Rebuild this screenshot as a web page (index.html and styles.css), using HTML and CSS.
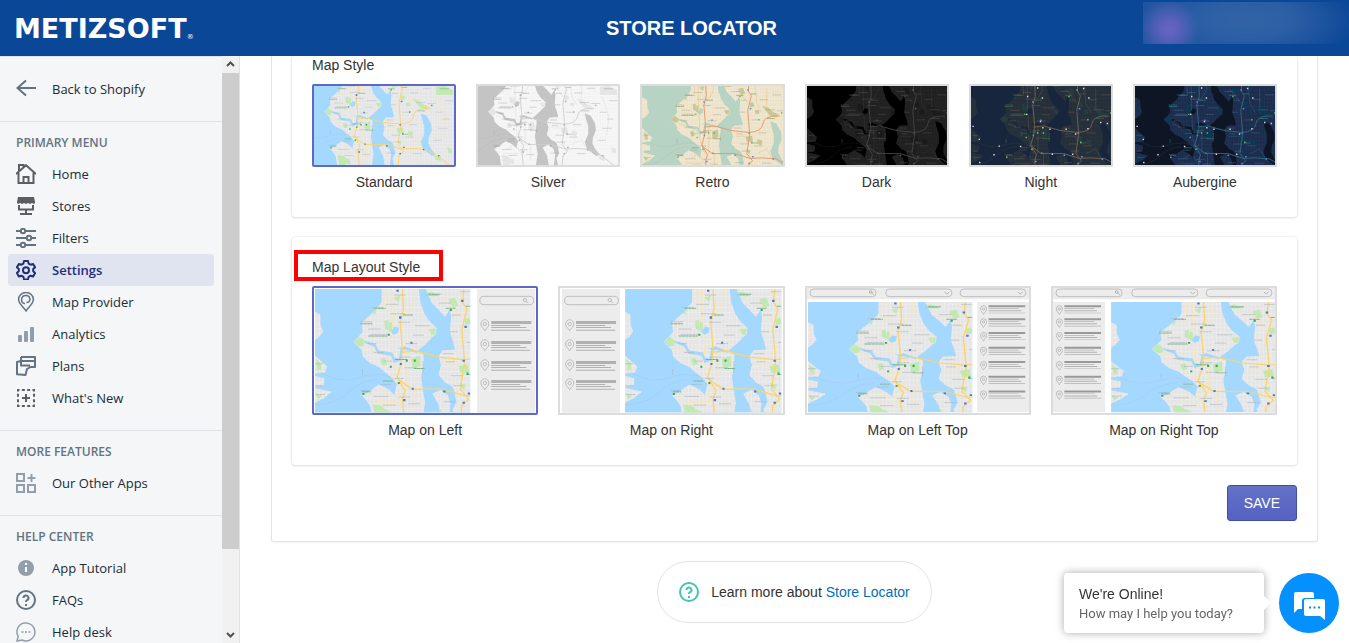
FILE: index.html
```html
<!DOCTYPE html>
<html lang="en">
<head>
<meta charset="utf-8">
<meta name="viewport" content="width=device-width, initial-scale=1">
<title>Store Locator</title>
<link rel="stylesheet" href="styles.css">
</head>
<body>
<svg class="defs" aria-hidden="true">
  <defs>
    <path id="land" d="M200 -5V40L172 72L139 102L143 128L130 144L115 158L139 182L144 203L164 222L192 234L212 252L232 268L246 285L242 298L238 318L222 302L192 286L172 300L158 312L138 316L154 334L166 352L172 395H322L330 340L322 296L318 262L326 222L325 196L306 186L330 166L352 144L362 136L364 116L344 98L328 74L316 40L310 -5ZM-10 68H0L16 78V104L24 128L10 146L-10 158ZM-10 190L16 214L36 232L30 250L-10 254ZM-10 258L28 268L26 288L-10 294ZM-10 294L50 308L28 326L-10 346ZM330 -5L350 42L372 64L390 84L404 60L408 84L404 128L412 152L420 182L382 184L370 202L378 228L370 258L390 280L412 292L420 318L424 340L412 360L420 395H700V-5ZM352 314L376 302L398 318L406 344L400 395H380L370 346Z"/>
    <clipPath id="land-clip"><use href="#land"/></clipPath>
    <g id="map">
      <rect class="m-water" x="-20" y="-20" width="740" height="440"/>
      <use class="m-land" href="#land"/>
      <g clip-path="url(#land-clip)">
        <path class="m-street" stroke-width="420" stroke-dasharray="2 9" d="M-10 190H700"/>
        <path class="m-street" stroke-width="720" stroke-dasharray="2 14" d="M345 -10V400"/>
        <path class="m-park" d="M115 158L133 143L150 155L146 170L132 172ZM236 25L256 20L250 40ZM208 96L220 92L222 122L210 120ZM340 120L362 118L360 138L348 136ZM222 100H232V128H222ZM318 12L350 8L372 22H330ZM400 30L420 26L430 50L412 56ZM166 64L184 60L180 78ZM196 210L210 205L216 226L202 230ZM288 208L314 200L316 232L292 236ZM174 346L200 350L216 368L206 390H180ZM210 360L226 366L228 385H212ZM156 300L170 296L168 316ZM430 230L458 226L462 250L436 252ZM446 90L462 86L468 104L450 108ZM350 350L366 344L380 368L362 372ZM2 210L18 222V244L6 240ZM0 312L20 320L10 332ZM500 100L525 108L548 128L570 138L560 150L530 140ZM600 50L640 45L675 64V85H602ZM470 120L488 118V134H472ZM480 240L502 246L498 266L480 260ZM592 352L620 346L622 372L600 366ZM650 310L670 320V340L654 336ZM380 100L396 98V120L384 118ZM556 200L562 190L568 210ZM430 282L452 286L446 304Z"/>
        <path class="m-minor" d="M230 0L232 90L236 180L238 240L258 300M296 0L294 40L270 80M200 320L232 300L262 345M212 0L216 60M180 340H250M470 0L478 90L500 130M520 30V110M392 30L440 90M610 90L640 180L630 260M480 300L520 280L550 330M390 228H440M276 180V300M300 300V370M150 175L230 205"/>
      </g>
      <path class="m-water" d="M228 128L238 112L252 116L248 132L236 138ZM150 155L180 164L192 184L232 190L238 206L252 208L256 180L246 178L270 172L306 186L306 192L270 182L260 186L258 214L236 222L228 200L188 194L176 172L150 162ZM535 165L560 175L580 210L583 240L570 270L568 295L580 320L600 345L585 350L545 320L535 290L550 255L550 220L540 190Z"/>
      <path class="m-ferry" d="M0 240Q70 286 130 266T236 268M0 346Q60 346 100 310T186 272"/>
      <path class="m-road" d="M262 -5L265 60L255 100L262 180L258 224L246 264L270 305L262 330L268 395M258 190L300 185L370 204L444 212M246 268L290 300H385L450 320L500 318L560 322L610 350L665 395M446 -5L442 40L455 60L440 120L448 220L436 300L460 330L440 350L436 395M444 212Q500 210 504 175T575 144"/>
      <path class="m-label" d="M238 18h32M212 46h38M170 56h34M226 74h44M136 98h36M250 100h36M160 120h38M300 110h44M166 136h50M294 138h32M158 164h26M272 164h36M176 190h30M206 216h26M252 204h34M268 236h38M238 268h28M196 286h32M176 322h44M252 324h34M204 348h38M280 344h36M136 304h30M332 18h40M372 42h36M410 78h26M404 128h24M384 194h30M392 218h26M408 260h34M416 290h26M386 338h34M434 8h30M456 160h30M490 76h34M512 118h42M564 122h38M600 160h30M484 214h36M468 268h34M610 230h42M592 282h34M500 340h40M632 190h26M544 56h36M600 24h40M640 110h38M2 290h22M4 316h26M0 224h24M324 216v34M142 240v18"/>
      <path class="m-label-green" d="M136 104h36M160 141h56M178 58h34M240 211h36M296 238h32M142 308h24M392 58h30M340 16h36M454 256h26M204 276h30M264 78h30M520 154h34M618 58h40M452 52h24"/>
      <path class="m-shield" d="M252 82h7v7h-7zM244 2h7v6h-7zM286 158h6v6h-6zM254 222h6v6h-6zM290 296h6v6h-6zM264 330h7v6h-7zM438 32h7v7h-7zM448 110h7v7h-7zM442 212h7v6h-7zM384 304h7v6h-7zM458 310h7v6h-7zM442 338h7v6h-7zM544 320h7v6h-7zM610 346h6v6h-6z"/>
      <path class="m-poi" d="M218 134h6v6h-6zM272 211h6v7h-6zM296 211h6v7h-6zM248 279h6v6h-6zM142 312h6v6h-6zM404 60h6v6h-6zM454 250h6v7h-6zM224 230h6v6h-6zM484 156h6v6h-6zM580 128h6v6h-6z"/>
      <path class="m-dot" d="M230 60h6v6h-6zM292 66h6v6h-6zM226 134h6v6h-6zM284 164h6v6h-6zM110 266h6v6h-6zM88 302h6v6h-6zM26 238h6v6h-6zM200 268h6v6h-6zM324 196h6v6h-6zM392 196h6v6h-6zM488 66h6v6h-6zM538 168h6v6h-6zM566 172h6v6h-6zM484 194h6v6h-6zM272 24h6v6h-6zM466 26h6v6h-6zM420 300h6v6h-6zM334 300h6v6h-6zM0 184h6v6h-6zM28 334h6v6h-6zM432 216h6v6h-6zM294 190h6v6h-6z"/>
    </g>
    <g id="pin"><path d="M0 19C-4 11-12 8-12-1A12 13 0 0 1 12-1C12 8 4 11 0 19Z"/><circle r="5" cy="-1"/></g>
    <g id="pin-small"><path d="M0 15C-3 8-9 6-9-1A9 10 0 0 1 9-1C9 6 3 8 0 15Z"/><circle r="3.5" cy="-1"/></g>
    <g id="row"><use class="line" href="#pin"/><path class="bar" d="M19-10h120v9H19zM19 2h87v3H19zM19 8h105v3H19zM19 16h117v3H19z"/></g>
    <g id="row-small"><use class="line" href="#pin-small"/><path class="bar-dark" d="M15-12h110v6H15z"/><path class="bar" d="M15-3h90v2H15zM15 3h98v3H15zM15 10h110v2H15z"/></g>
    <g id="list">
      <rect class="panel" width="174" height="371"/>
      <g class="line"><rect x="8" y="22" width="161" height="25" rx="12"/><circle cx="143" cy="33" r="5"/><path d="M147 37l6 5"/></g>
      <use href="#row" x="23" y="106"/><use href="#row" x="23" y="166"/><use href="#row" x="23" y="226"/><use href="#row" x="23" y="283"/>
    </g>
    <g id="list-small">
      <rect class="panel" width="156" height="330"/>
      <use href="#row-small" x="19" y="22"/><use href="#row-small" x="19" y="61"/><use href="#row-small" x="19" y="102"/><use href="#row-small" x="19" y="146"/><use href="#row-small" x="19" y="189"/><use href="#row-small" x="19" y="233"/><use href="#row-small" x="19" y="277"/>
    </g>
    <g id="filters">
      <rect class="panel" x="6" y="6" width="666" height="34"/>
      <g class="line"><rect x="15" y="9" width="198" height="23" rx="11"/><rect x="242" y="9" width="198" height="23" rx="11"/><rect x="465" y="9" width="197" height="23" rx="11"/></g>
      <g class="mark"><circle cx="197" cy="18" r="4"/><path d="M200 21l6 5M418 18l7 6 7-6M638 18l7 6 7-6"/></g>
    </g>
  </defs>
</svg>

<header class="topbar">
  <a class="logo" href="#" aria-label="Metizsoft">METIZSOFT<span class="logo-mark">®</span></a>
  <h1 class="title">STORE LOCATOR</h1>
  <div class="account"></div>
</header>

<div class="body">
  <aside class="sidebar">
    <nav class="menu">
      <div class="section back">
        <a class="item" href="#"><svg class="icon slate" viewBox="0 0 20 20"><path d="M20 9H1.500M10 1.500L1.500 9l8.500 7.500"/></svg>Back to Shopify</a>
      </div>
      <div class="section">
        <h2 class="heading">PRIMARY MENU</h2>
        <a class="item" href="#"><svg class="icon gray" viewBox="0 0 20 20"><path d="M0 10L10 1.200 20 10M2.500 8V19h15V8M3 7V1h4.500v2.500M7.500 19v-6h5v6"/></svg>Home</a>
        <a class="item" href="#"><svg class="icon gray" viewBox="0 0 20 20"><path class="solid" d="M2 1h16l1 5v1l-1 1-2-1-2 1-2-1-2 1-2-1-2 1-2-1-2 1-1-1V6z"/><path d="M3 9v4.500h14V9M10 14v4M4 18h12"/></svg>Stores</a>
        <a class="item" href="#"><svg class="icon slate" viewBox="0 0 20 20"><path d="M0 3h4.500M9.500 3H20M0 10h10.500M15.500 10H20M0 17h4.500M9.500 17H20"/><circle cx="7" cy="3" r="2.200"/><circle cx="13" cy="10" r="2.200"/><circle cx="7" cy="17" r="2.200"/></svg>Filters</a>
        <a class="item current" href="#" aria-current="page"><svg class="icon navy" viewBox="0 0 20 20"><path stroke-linejoin="round" d="M8 1h4l.6 2.600 2 1.100 2.500-.8 2 3.400-1.900 1.800v2.200l1.900 1.800-2 3.400-2.500-.8-2 1.100L12 19.400H8l-.6-2.600-2-1.100-2.500.8-2-3.400 1.900-1.800V9.100L.9 7.300l2-3.400 2.500.8 2-1.100z"/><circle cx="10" cy="10.200" r="3"/></svg>Settings</a>
        <a class="item" href="#"><svg class="icon slate thin" viewBox="0 0 20 20"><path d="M10 19C8 15 2.600 12 2.600 7.500a7.400 7 0 0 1 14.800 0C17.400 12 12 15 10 19z"/><path d="M9 11.800A4.200 4.200 0 1 1 14 7.500A3.500 3.500 0 0 1 10.500 10.500"/></svg>Map Provider</a>
        <a class="item" href="#"><svg class="icon mist" viewBox="0 0 20 20"><g class="solid"><rect x="2" y="11" width="4" height="7" rx="1"/><rect x="8" y="7" width="4" height="11" rx="1"/><rect x="14" y="3" width="4" height="15" rx="1"/></g></svg>Analytics</a>
        <a class="item" href="#"><svg class="icon slate" viewBox="0 0 20 20"><path stroke-linejoin="round" d="M5 1h14v10h-4.500l-3.500 2-1.500 6-8.500-.8V6l4-1M5 1v8.500h9M5 5h14"/></svg>Plans</a>
        <a class="item" href="#"><svg class="icon gray" viewBox="0 0 20 20"><path stroke-dasharray="3 2.330" d="M2 3.500V2h16v16H2V3.500"/><path d="M10 6v8M6 10h8"/></svg>What's New</a>
      </div>
      <div class="section">
        <h2 class="heading">MORE FEATURES</h2>
        <a class="item" href="#"><svg class="icon mist" viewBox="0 0 20 20"><path d="M1 1h7v7H1zM1 12h7v7H1zM12 12h7v7h-7zM15.500 1v8M11.500 5h8"/></svg>Our Other Apps</a>
      </div>
      <div class="section">
        <h2 class="heading">HELP CENTER</h2>
        <a class="item" href="#"><svg class="icon mist" viewBox="0 0 20 20"><circle class="solid" cx="10" cy="10" r="8"/><path class="knock" d="M10 9v5M10 5v2"/></svg>App Tutorial</a>
        <a class="item" href="#"><svg class="icon slate" viewBox="0 0 20 20"><circle cx="10" cy="10" r="9"/><path d="M7.500 8a2.500 2.500 0 1 1 3.500 2.200q-1 .5-1 1.800M10 14v2"/></svg>FAQs</a>
        <a class="item" href="#"><svg class="icon mist thin" viewBox="0 0 20 20"><path d="M1 19l1.200-4.500A9 9 0 1 1 6 18z"/><path d="M5.500 10h2M9 10h2M12.500 10h2"/></svg>Help desk</a>
      </div>
    </nav>
    <div class="scroll" aria-hidden="true">
      <svg class="arrow" viewBox="0 0 17 17"><path d="M5 10l3.500-3.500L12 10"/></svg>
      <div class="track"><div class="grip"></div></div>
      <svg class="arrow" viewBox="0 0 17 17"><path d="M5 7l3.500 3.500L12 7"/></svg>
    </div>
  </aside>

  <main class="main">
    <form class="settings">
      <fieldset class="card styles" aria-labelledby="style-name">
        <div class="label"><span id="style-name">Map Style</span></div>
        <div class="grid six">
          <label class="choice"><input type="radio" name="style" checked><svg class="thumb small" viewBox="71 46 609 344" preserveAspectRatio="none"><use href="#map"/></svg>Standard</label>
          <label class="choice"><input type="radio" name="style"><svg class="thumb small silver" viewBox="71 46 609 344" preserveAspectRatio="none"><use href="#map"/></svg>Silver</label>
          <label class="choice"><input type="radio" name="style"><svg class="thumb small retro" viewBox="-6 19 591 329" preserveAspectRatio="none"><use href="#map"/></svg>Retro</label>
          <label class="choice"><input type="radio" name="style"><svg class="thumb small dark" viewBox="-6 19 591 329" preserveAspectRatio="none"><use href="#map"/></svg>Dark</label>
          <label class="choice"><input type="radio" name="style"><svg class="thumb small night" viewBox="-6 19 591 329" preserveAspectRatio="none"><use href="#map"/></svg>Night</label>
          <label class="choice"><input type="radio" name="style"><svg class="thumb small aubergine" viewBox="-6 19 591 329" preserveAspectRatio="none"><use href="#map"/></svg>Aubergine</label>
        </div>
      </fieldset>

      <fieldset class="card" aria-labelledby="layout-name">
        <div class="label"><span id="layout-name" class="marked">Map Layout Style</span></div>
        <div class="grid four">
          <label class="choice"><input type="radio" name="layout" checked><svg class="thumb large" viewBox="6 6 666 375" preserveAspectRatio="none"><svg x="9" y="9" width="465" height="370" viewBox="0 0 465 370" preserveAspectRatio="none"><use href="#map"/></svg><use href="#list" x="495" y="9"/></svg>Map on Left</label>
          <label class="choice"><input type="radio" name="layout"><svg class="thumb large" viewBox="6 6 666 375" preserveAspectRatio="none"><use href="#list" x="12" y="9"/><svg x="201" y="9" width="468" height="370" viewBox="0 0 465 370" preserveAspectRatio="none"><use href="#map"/></svg></svg>Map on Right</label>
          <label class="choice"><input type="radio" name="layout"><svg class="thumb large" viewBox="6 6 666 375" preserveAspectRatio="none"><use href="#filters"/><svg x="9" y="48" width="492" height="330" viewBox="0 0 465 370" preserveAspectRatio="none"><use href="#map"/></svg><use href="#list-small" x="516" y="48"/></svg>Map on Left Top</label>
          <label class="choice"><input type="radio" name="layout"><svg class="thumb large" viewBox="6 6 666 375" preserveAspectRatio="none"><use href="#filters"/><use href="#list-small" x="6" y="48"/><svg x="180" y="48" width="492" height="330" viewBox="0 0 465 370" preserveAspectRatio="none"><use href="#map"/></svg></svg>Map on Right Top</label>
        </div>
      </fieldset>

      <div class="actions"><button class="save" type="button">SAVE</button></div>
    </form>

    <p class="learn">
      <svg class="help" viewBox="0 0 20 20"><circle cx="10" cy="10" r="9"/><path d="M7.500 8a2.500 2.500 0 1 1 3.500 2.200q-1 .5-1 1.800M10 14v2"/></svg>
      <span>Learn more about <a href="#">Store Locator</a></span>
    </p>
  </main>
</div>

<div class="chat">
  <div class="bubble"><div class="bubble-title">We're Online!</div><div class="bubble-text">How may I help you today?</div></div>
  <button class="chat-button" type="button" aria-label="Open chat">
    <svg viewBox="0 0 60 60"><path fill="#fff" d="M17 19h16q2 0 2 2v4H26q-3 0-3 3v8h-4l-4 4V21q0-2 2-2z"/><path fill="#fff" d="M27 26h17q2 0 2 2v19l-5-4H27q-2 0-2-2V28q0-2 2-2z"/><path fill="#0491ff" d="M30 33.500h2v2h-2zM34.500 33.500h2v2h-2zM39 33.500h2v2h-2z"/></svg>
  </button>
</div>
</body>
</html>
```
FILE: styles.css
```css
* { box-sizing: border-box; }

body {
  margin: 0;
  height: 100vh;
  display: flex;
  flex-direction: column;
  overflow: hidden;
  background: #fff;
  color: #333;
  font: 14px/20px "Liberation Sans", Arial, sans-serif;
}

.defs { position: absolute; width: 0; height: 0; }

/* Top bar */
.topbar {
  flex: none;
  height: 56px;
  display: flex;
  align-items: center;
  background: #0b4797;
  color: #fff;
}
.logo {
  width: 240px;
  padding: 2px 0 0 14px;
  display: flex;
  align-items: flex-end;
  color: #fff;
  font: bold 27px/32px "DejaVu Sans", sans-serif;
  text-decoration: none;
}
.logo-mark { font-size: 7px; line-height: 16px; font-weight: normal; }
.title { flex: 1; margin: 0; text-align: center; font-size: 20px; line-height: 24px; }
.account {
  width: 206px;
  height: 42px;
  margin-bottom: 10px;
  background:
    radial-gradient(circle at 26px 27px, #6a64c2 0, #6663c0cc 10px, #6663c000 30px),
    radial-gradient(ellipse 110px 44px at 104px 18px, #3263a6 0, #2c5fa5 40%, #2c5fa500 100%),
    linear-gradient(90deg, #1f55a0, #0b4797 95%);
}

.body { flex: 1; min-height: 0; display: flex; }

/* Sidebar */
.sidebar {
  flex: none;
  width: 240px;
  display: flex;
  overflow: hidden;
  border-right: 1px solid #dfe3e8;
  background: #f4f6f8;
}
.menu { flex: 1; overflow: hidden; font-family: "Open Sans", "Noto Sans", sans-serif; }
.section { padding-bottom: 16px; border-top: 1px solid #dfe3e8; }
.back { padding-top: 16px; }
.heading {
  margin: 0;
  padding: 13px 16px 7px;
  color: #637381;
  font-size: 12px;
  line-height: 16px;
  font-weight: 600;
}
.item {
  display: flex;
  align-items: center;
  gap: 16px;
  height: 32px;
  margin: 0 8px;
  padding: 0 8px;
  border-radius: 3px;
  color: #212b36;
  font-size: 13px;
  text-decoration: none;
}
.current { background: #e0e4f1; color: #202e78; font-weight: 600; }
.icon { flex: none; width: 20px; height: 20px; fill: none; stroke: currentColor; stroke-width: 2; }
.thin { stroke-width: 1.5; }
.slate { color: #637381; }
.gray { color: #5c5f62; }
.navy { color: #202e78; }
.mist { color: #919eab; }
.solid { fill: currentColor; stroke: none; }
.knock { stroke: #fff; }

.scroll { flex: none; width: 17px; display: flex; flex-direction: column; background: #f1f1f1; }
.arrow { flex: none; width: 17px; height: 17px; fill: none; stroke: #505050; stroke-width: 2; }
.track { flex: 1; }
.grip { height: 86%; background: #cdcdcd; }

/* Content */
.main { flex: 1; overflow: hidden; padding: 0 31px; }
.settings {
  padding: 0 20px 20px;
  border: 1px solid #e4e4e4;
  border-top: 0;
  border-radius: 0 0 3px 3px;
  box-shadow: 0 1px 2px #0000000d;
}
.card {
  min-width: 0;
  margin: 0 0 20px;
  padding: 21px 20px 25px;
  border: 0;
  border-radius: 3px;
  box-shadow: 0 0 2px #00000026, 0 1px 3px #0000001a;
}
.styles { padding-top: 0; }
.label { height: 28px; line-height: 18px; }
.marked { position: relative; }
.marked::after {
  content: "";
  position: absolute;
  inset: -9px -23px -6px -18px;
  border: 4px solid #f00;
}
.grid { display: grid; gap: 20px; }
.six { grid-template-columns: repeat(6, 1fr); }
.four { grid-template-columns: repeat(4, 1fr); }
.choice { min-width: 0; text-align: center; }
.choice input { position: absolute; appearance: none; margin: 0; opacity: 0; }
.thumb {
  display: block;
  width: 100%;
  margin-bottom: 5px;
  border: 2px solid #dcdcdc;
}
.small { aspect-ratio: 144 / 83; }
.large { aspect-ratio: 226 / 129; }
input:checked + .thumb { border-color: #5c6ac4; border-radius: 2px; }

.actions { display: flex; justify-content: flex-end; }
.save {
  height: 36px;
  padding: 0 16px;
  border: 1px solid #3f4eae;
  border-radius: 3px;
  background: linear-gradient(#6371c7, #5563c1);
  color: #fff;
  font: inherit;
}
.learn {
  display: flex;
  align-items: center;
  gap: 12px;
  width: max-content;
  height: 62px;
  margin: 19px auto 0;
  padding: 0 21px;
  border: 1px solid #dfe3e8;
  border-radius: 31px;
}
.learn a { color: #006fbb; text-decoration: none; }
.help { width: 20px; height: 20px; fill: none; stroke: #47c1bf; stroke-width: 2; }

/* Map drawing */
.thumb {
  --water: #a5d8ff;
  --land: #e5e5e5;
  --street: #ededed;
  --minor: #f8e6b4;
  --road: #fbd568;
  --park: #c2e8b4;
  --label: #adb3bd;
  --green: #74b584;
  --shield: #4b78c9;
  --poi: #35a853;
  --dot: transparent;
}
.silver {
  --water: #c4c4c4; --land: #f3f3f3; --street: #f9f9f9; --minor: #e4e4e4; --road: #cfcfcf;
  --park: #e5e5e5; --label: #a4a4a4; --green: #aaa; --shield: #aaa; --poi: #aaa;
}
.retro {
  --water: #b7d3c3; --land: #ece2c8; --street: #f1ead8; --minor: #eccb93; --road: #e5986c;
  --park: #c5c997; --label: #a89c8a; --green: #8f9a62; --shield: #6093cd; --poi: #6eb36a;
}
.dark {
  --water: #000; --land: #202020; --street: #262626; --minor: #303030; --road: #424242;
  --park: #1a1a1a; --label: #5c5c5c; --green: #4c4c4c; --shield: #555; --poi: #444;
}
.night {
  --water: #17263c; --land: #252f3a; --street: #2c3641; --minor: #4b4a48; --road: #74604d;
  --park: #263c3f; --label: #80664c; --green: #41705a; --shield: #6898d8; --poi: #66d057; --dot: #ddd;
}
.aubergine {
  --water: #0e1626; --land: #1d2c4d; --street: #233658; --minor: #2c526d; --road: #36667c;
  --park: #0b3b53; --label: #527b94; --green: #2d8680; --shield: #5687cc; --poi: #55bc65; --dot: #ddd;
}
.m-water { fill: var(--water); }
.m-land { fill: var(--land); }
.m-street, .m-minor, .m-road, .m-ferry, .m-label, .m-label-green { fill: none; }
.m-street { stroke: var(--street); }
.m-minor { stroke: var(--minor); stroke-width: 3; }
.m-road { stroke: var(--road); stroke-width: 4; }
.m-ferry { stroke: var(--label); stroke-width: 1; stroke-dasharray: 5 3; }
.m-label { stroke: var(--label); stroke-width: 2; stroke-dasharray: 8 1; }
.m-label-green { stroke: var(--green); stroke-width: 3; stroke-dasharray: 9 1; }
.m-park { fill: var(--park); }
.m-shield { fill: var(--shield); }
.m-poi { fill: var(--poi); }
.m-dot { fill: var(--dot); }

.panel { fill: #ececec; }
.line { fill: none; stroke: #a8a8a8; stroke-width: 2; }
.mark { fill: none; stroke: #999; stroke-width: 2; }
.bar { fill: #b1b1b1; }
.bar-dark { fill: #999; }

/* Chat */
.chat { position: fixed; right: 10px; bottom: 10px; display: flex; gap: 15px; }
.bubble {
  position: relative;
  width: 200px;
  height: 60px;
  padding: 11px 15px;
  border-radius: 4px;
  background: #fff;
  box-shadow: 0 0 8px #00000059;
}
.bubble::after {
  content: "";
  position: absolute;
  top: 25px;
  right: -5px;
  width: 10px;
  height: 10px;
  background: #fff;
  transform: rotate(45deg);
}
.bubble-title { font-size: 14px; line-height: 20px; }
.bubble-text { color: #666; font: 13px/20px Roboto, sans-serif; }
.chat-button {
  width: 60px;
  height: 60px;
  padding: 0;
  border: 0;
  border-radius: 50%;
  background: #0491ff;
}
.chat-button svg { display: block; }
```
